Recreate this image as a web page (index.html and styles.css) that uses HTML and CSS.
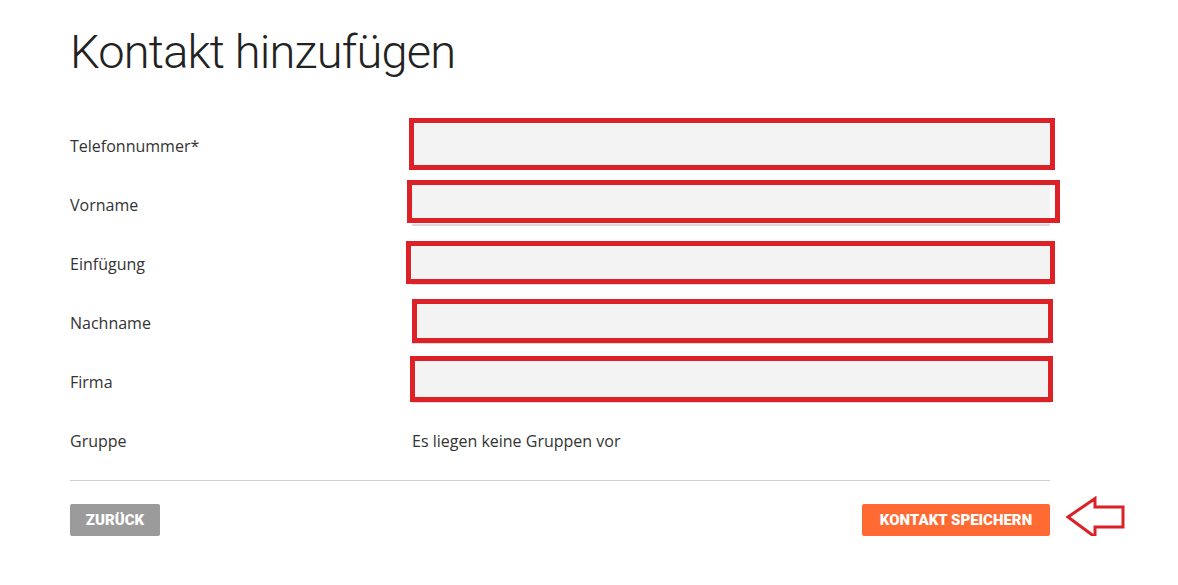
FILE: index.html
```html
<!DOCTYPE html>
<html lang="de">
<head>
<meta charset="utf-8">
<title>Kontakt hinzufügen</title>
<link rel="stylesheet" href="styles.css">
</head>
<body>
<div class="page">
  <h1 class="title">Kontakt hinzufügen</h1>
  <form class="form">
    <div class="row">
      <label class="label">Telefonnummer*</label>
      <div class="field"><input class="input" type="text"><span class="mark mark-1"></span></div>
    </div>
    <div class="row">
      <label class="label">Vorname</label>
      <div class="field"><input class="input" type="text"><span class="mark mark-2"></span></div>
    </div>
    <div class="row">
      <label class="label">Einfügung</label>
      <div class="field"><input class="input" type="text"><span class="mark mark-3"></span></div>
    </div>
    <div class="row">
      <label class="label">Nachname</label>
      <div class="field"><input class="input" type="text"><span class="mark mark-4"></span></div>
    </div>
    <div class="row">
      <label class="label">Firma</label>
      <div class="field"><input class="input" type="text"><span class="mark mark-5"></span></div>
    </div>
    <div class="row">
      <span class="label">Gruppe</span>
      <span class="value">Es liegen keine Gruppen vor</span>
    </div>
    <div class="divider"></div>
    <div class="actions">
      <button class="btn btn-back" type="button">ZURÜCK</button>
      <div class="save-wrap">
        <button class="btn btn-save" type="button">KONTAKT SPEICHERN</button>
        <svg class="arrow" width="62" height="44" viewBox="0 0 62 44">
          <path d="M3 21 L30 2.5 L30 11 L58 11 L58 31 L30 31 L30 41 Z" fill="none" stroke="#dc2027" stroke-width="3" stroke-linejoin="miter"/>
        </svg>
      </div>
    </div>
  </form>
</div>
</body>
</html>
```

FILE: styles.css
```css
* { box-sizing: border-box; }
html, body { margin: 0; padding: 0; background: #fff; }
body {
  font-family: "Open Sans", "Liberation Sans", sans-serif;
  color: #333;
}
.page {
  width: 1050px;
  padding: 22px 0 0 70px;
}
.title {
  margin: 0;
  font-family: Roboto, "Liberation Sans", sans-serif;
  font-weight: 300;
  font-size: 47px;
  line-height: 60px;
  letter-spacing: -0.8px;
  color: #222;
}
.form {
  margin-top: 34px;
}
.row {
  display: grid;
  grid-template-columns: 342px 638px;
  align-items: center;
  height: 59px;
}
.label, .value {
  font-size: 16px;
  color: #333;
}
.field {
  position: relative;
  height: 43px;
}
.input {
  display: block;
  width: 100%;
  height: 43px;
  border: 0;
  border-bottom: 2px solid #dadada;
  background: #f3f3f3;
  margin: 0;
  padding: 0 10px;
  font: inherit;
}
.mark {
  position: absolute;
  border: 5px solid #dc2127;
  pointer-events: none;
}
.mark-1 { left: -3px; right: -5px; top: -6px; bottom: -3px; }
.mark-2 { left: -5px; right: -10px; top: -3px; bottom: 3px; }
.mark-3 { left: -6px; right: -5px; top: -1px; bottom: 1px; }
.mark-4 { left: 0; right: -3px; top: -2px; bottom: 1px; }
.mark-5 { left: -2px; right: -3px; top: -4px; bottom: 1px; }
.divider {
  margin-top: 10px;
  height: 1px;
  background: #cfcfcf;
  width: 980px;
}
.actions {
  margin-top: 23px;
  width: 980px;
  display: flex;
  justify-content: space-between;
  align-items: center;
}
.save-wrap {
  position: relative;
}
.btn {
  height: 32px;
  border: 0;
  border-radius: 2px;
  color: #fff;
  font-family: Roboto, "Liberation Sans", sans-serif;
  font-weight: 900;
  font-size: 15px;
  letter-spacing: 0;
  padding: 0;
  cursor: pointer;
}
.btn-back {
  background: #9b9b9b;
  width: 90px;
}
.btn-save {
  background: #ff6a33;
  width: 188px;
}
.arrow {
  position: absolute;
  left: 203px;
  top: -8px;
}
```
